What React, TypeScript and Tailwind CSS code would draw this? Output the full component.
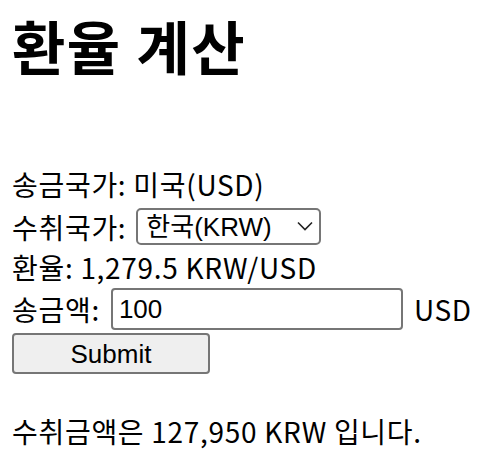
import React, { useState } from "react";

const App = () => {
  const [amount, setAmount] = useState("100");

  return (
    <div className="px-3 text-black font-['Noto_Sans_CJK_KR',sans-serif] text-[28px] leading-[40px] tracking-[0.7px]">
      <h1 className="pt-[10px] text-[58px] font-bold leading-[70px] tracking-[1.5px] mb-[84px]">
        환율 계산
      </h1>

      <form onSubmit={(e) => e.preventDefault()}>
        <div>송금국가: 미국(USD)</div>
        <div className="flex items-center h-[37px] mt-[4px]">
          <span className="leading-[34px]">수취국가:</span>
          <div className="relative ml-[10px]">
            <select
              defaultValue="KRW"
              className="appearance-none block h-[37px] w-[185px] border-2 border-[#767676] rounded-[5px] bg-white pl-[8px] pr-[30px] text-[26px] leading-[30px] tracking-normal font-['Liberation_Sans','Noto_Sans_CJK_KR',sans-serif]"
            >
              <option value="KRW">한국(KRW)</option>
              <option value="JPY">일본(JPY)</option>
              <option value="PHP">필리핀(PHP)</option>
            </select>
            <svg
              className="absolute right-[8px] top-[13px] pointer-events-none"
              width="16"
              height="10"
              viewBox="0 0 16 10"
              fill="none"
              stroke="#222"
              strokeWidth="1.6"
            >
              <path d="M1 1.5 L8 8.5 L15 1.5" />
            </svg>
          </div>
        </div>
        <div className="leading-[32px] mt-[6px]">환율: 1,279.5 KRW/USD</div>
        <div className="flex items-center h-[42px] mt-[5px]">
          <span>송금액:</span>
          <input
            value={amount}
            onChange={(e) => setAmount(e.target.value)}
            className="ml-[11px] h-[42px] w-[292px] border-2 border-[#767676] rounded-[4px] px-[6px] text-[26px] tracking-normal font-['Liberation_Sans',sans-serif] outline-none"
          />
          <span className="ml-[11px]">USD</span>
        </div>
        <button
          type="submit"
          className="mt-[3px] h-[41px] w-[198px] border-2 border-[#767676] rounded-[4px] bg-[#efefef] text-[26px] leading-none tracking-normal font-['Liberation_Sans',sans-serif]"
        >
          Submit
        </button>
      </form>

      <p className="mt-[37px]">수취금액은 127,950 KRW 입니다.</p>
    </div>
  );
};

export default App;
